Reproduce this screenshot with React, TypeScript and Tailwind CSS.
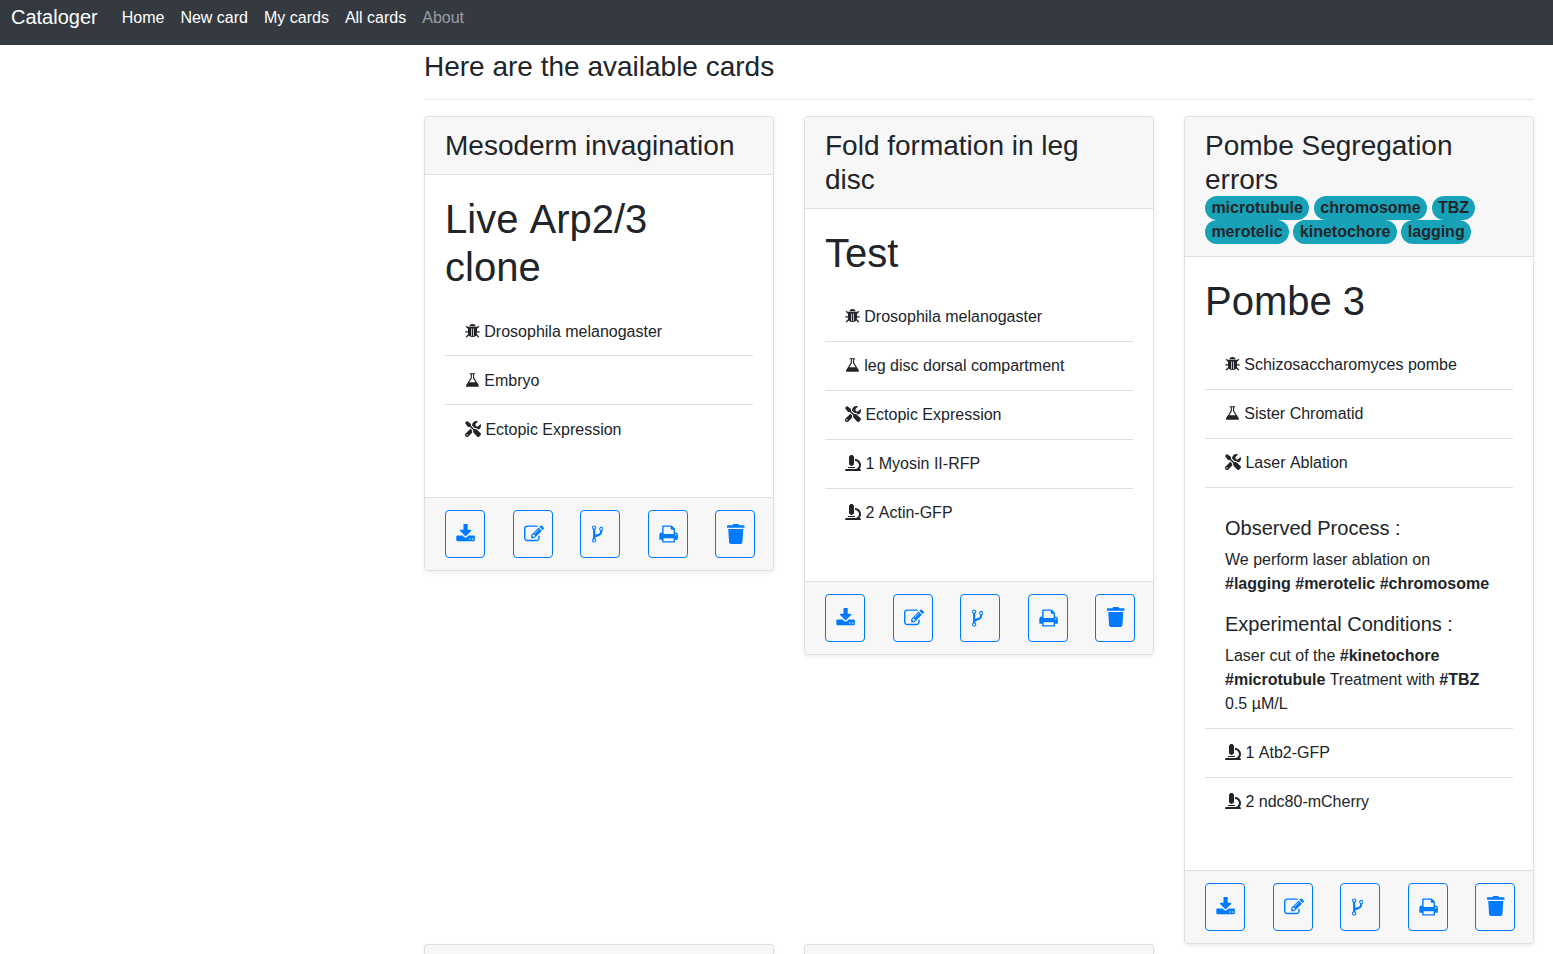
import type { ReactNode } from "react";
import { FaMicroscope, FaTools, FaTrash } from "react-icons/fa";

const paths = {
  flask: "M1591 1448q56 89 21.5 152.5t-140.5 63.5h-1152q-106 0-140.5-63.5t21.5-152.5l503-793v-399h-64q-26 0-45-19t-19-45 19-45 45-19h512q26 0 45 19t19 45-19 45-45 19h-64v399zm-779-725l-272 429h712l-272-429-20-31v-436h-128v436z",
  download: "M1344 1344q0-26-19-45t-45-19-45 19-19 45 19 45 45 19 45-19 19-45zm256 0q0-26-19-45t-45-19-45 19-19 45 19 45 45 19 45-19 19-45zm128-224v320q0 40-28 68t-68 28h-1472q-40 0-68-28t-28-68v-320q0-40 28-68t68-28h465l135 136q58 56 136 56t136-56l136-136h464q40 0 68 28t28 68zm-325-569q17 41-14 70l-448 448q-18 19-45 19t-45-19l-448-448q-31-29-14-70 17-39 59-39h256v-448q0-26 19-45t45-19h256q26 0 45 19t19 45v448h256q42 0 59 39z",
  edit: "M888 1184l116-116-152-152-116 116v56h96v96h56zm440-720q-16-16-33 1l-350 350q-17 17-1 33t33-1l350-350q17-17 1-33zm80 594v190q0 119-84.5 203.5t-203.5 84.5h-832q-119 0-203.5-84.5t-84.5-203.5v-832q0-119 84.5-203.5t203.5-84.5h832q63 0 117 25 15 7 18 23 3 17-9 29l-49 49q-14 14-32 8-23-6-45-6h-832q-66 0-113 47t-47 113v832q0 66 47 113t113 47h832q66 0 113-47t47-113v-126q0-13 9-22l64-64q15-15 35-7t20 29zm-96-738l288 288-672 672h-288v-288zm444 132l-92 92-288-288 92-92q28-28 68-28t68 28l152 152q28 28 28 68t-28 68z",
  fork: "M672 1472q0-40-28-68t-68-28-68 28-28 68 28 68 68 28 68-28 28-68zm0-1152q0-40-28-68t-68-28-68 28-28 68 28 68 68 28 68-28 28-68zm640 128q0-40-28-68t-68-28-68 28-28 68 28 68 68 28 68-28 28-68zm96 0q0 52-26 96.5t-70 69.5q-2 287-226 414-67 38-203 81-128 40-169.5 71t-41.5 100v26q44 25 70 69.5t26 96.5q0 80-56 136t-136 56-136-56-56-136q0-52 26-96.5t70-69.5v-820q-44-25-70-69.5t-26-96.5q0-80 56-136t136-56 136 56 56 136q0 52-26 96.5t-70 69.5v497q54-26 154-57 55-17 87.5-29.5t70.5-31 59-39.5 40.5-51 28-69.5 8.5-91.5q-44-25-70-69.5t-26-96.5q0-80 56-136t136-56 136 56 56 136z",
  print: "M448 1536h896v-256h-896v256zm0-640h896v-384h-160q-40 0-68-28t-28-68v-160h-640v640zm1152 64q0-26-19-45t-45-19-45 19-19 45 19 45 45 19 45-19 19-45zm128 0v416q0 13-9.5 22.5t-22.5 9.5h-224v160q0 40-28 68t-68 28h-960q-40 0-68-28t-28-68v-160h-224q-13 0-22.5-9.5t-9.5-22.5v-416q0-79 56.5-135.5t135.5-56.5h64v-544q0-40 28-68t68-28h672q40 0 88 20t76 48l152 152q28 28 48 76t20 88v256h64q79 0 135.5 56.5t56.5 135.5z",
};

function Glyph({ name, box, className }: { name: keyof typeof paths; box: string; className: string }) {
  return (
    <svg viewBox={box} fill="currentColor" className={className}>
      <path d={paths[name]} />
    </svg>
  );
}

function Bug() {
  return (
    <svg viewBox="0 0 14.86 16" fill="currentColor" className="mr-[4.45px] mb-[1.7px] h-4 w-[14.86px] shrink-0">
      <path d="M4.3 3.2Q4.6 1 7.5 1T10.7 3.2Z" />
      <path
        fillRule="evenodd"
        d="M3 3.8H12V10Q12 13.8 7.5 14Q3 13.8 3 10ZM6 5.4V13H6.7V5.4ZM8.3 5.4V13H9V5.4Z"
      />
      <path
        d="M1.4 3.6 3.6 5.6M.8 8.8H3.6M1.5 13.8 4.2 11M13.6 3.6 11.4 5.6M14.2 8.8H11.4M13.5 13.8 10.8 11"
        fill="none"
        stroke="currentColor"
        strokeWidth="1.3"
        strokeLinecap="round"
      />
    </svg>
  );
}

const itemIcons = {
  bug: <Bug />,
  flask: <Glyph name="flask" box="64 0 1664 1792" className="mr-[4.45px] mb-[1.7px] h-4 w-[14.86px] shrink-0" />,
  tools: <FaTools className="mr-[4.45px] mb-0.5 size-4 shrink-0" />,
  scope: <FaMicroscope className="mr-[4.45px] mb-0.5 size-4 shrink-0" />,
};

function Item({ icon, children, last, wide }: { icon: keyof typeof itemIcons; children: string; last?: boolean; wide?: boolean }) {
  return (
    <li
      className={
        last
          ? "flex items-center px-5 pt-[12.3px] pb-[11.7px]"
          : "flex items-center border-b border-[#dfdfdf] px-5 pt-[12.3px] pb-[11.7px]"
      }
    >
      {itemIcons[icon]}
      <span className={wide ? "[word-spacing:0.055em]" : undefined}>{children}</span>
    </li>
  );
}

function Action({ label, children }: { label: string; children: ReactNode }) {
  return (
    <button aria-label={label} className="flex h-12 w-10 shrink-0 items-center rounded border border-[#007bff] pl-2.5 text-[#007bff]">
      {children}
    </button>
  );
}

function Actions() {
  return (
    <footer className="flex gap-[27.55px] border-t border-[#dfdfdf] bg-[#f7f7f7] px-5 py-3">
      <Action label="Download"><Glyph name="download" box="37 0 1702 1792" className="h-5 w-[19px] shrink-0" /></Action>
      <Action label="Edit"><Glyph name="edit" box="0 0 1792 1792" className="size-5 shrink-0" /></Action>
      <Action label="Fork"><Glyph name="fork" box="384 0 1024 1792" className="ml-[0.5px] h-5 w-[11.43px] shrink-0" /></Action>
      <Action label="Print"><Glyph name="print" box="37 0 1702 1792" className="h-5 w-[19px] shrink-0" /></Action>
      <Action label="Delete"><FaTrash className="mb-px ml-px h-5 w-[17.5px] shrink-0" /></Action>
    </footer>
  );
}

function Card({ title, name, tags, children }: { title: string; name: string; tags?: string[][]; children: ReactNode }) {
  return (
    <article className="w-[350px] overflow-hidden rounded border border-[#dfdfdf] bg-white shadow-[0_2px_4px_rgba(0,0,0,0.075)]">
      <header className="border-b border-[#dfdfdf] bg-[#f7f7f7] px-5 pt-[12.2px] pb-[11.8px]">
        <h3 className="text-[28px] leading-[33.6px]">{title}</h3>
        {tags?.map((row) => (
          <div key={row[0]} className="flex h-6 gap-[4.5px]">
            {row.map((tag) => (
              <b key={tag} className="rounded-full bg-[#17a2b8] px-[6.4px]">{tag}</b>
            ))}
          </div>
        ))}
      </header>
      <div className="p-5">
        <h1 className={name.includes(" A") ? "w-[300px] text-[40px] leading-[48px] [word-spacing:0.055em]" : "text-[40px] leading-[48px]"}>
          {name}
        </h1>
        <ul className="mt-4 mb-6">{children}</ul>
      </div>
      <Actions />
    </article>
  );
}

export default function App() {
  return (
    <div className="h-[954px] overflow-hidden bg-white font-['Liberation_Sans',sans-serif] text-base text-[#212529]">
      <nav className="flex h-[45px] bg-[#343a40] pl-[11px] text-white">
        <span className="mr-6 pt-0.5 text-xl leading-[30px]">Cataloger</span>
        <div className="flex gap-4 pt-1.5 leading-6">
          <a>Home</a>
          <a>New card</a>
          <a>My cards</a>
          <a>All cards</a>
          <a className="text-white/50">About</a>
        </div>
      </nav>
      <main className="ml-[424px] w-[1110px]">
        <h3 className="pt-[5px] text-[28px] leading-[33.6px]">Here are the available cards</h3>
        <hr className="mt-[15.2px] border-t border-[#e5e5e5]" />
        <div className="mt-4 grid grid-cols-3 items-start gap-x-[30px]">
          <Card title="Mesoderm invagination" name="Live Arp2/3 clone">
            <Item icon="bug">Drosophila melanogaster</Item>
            <Item icon="flask">Embryo</Item>
            <Item icon="tools" last>Ectopic Expression</Item>
          </Card>
          <Card title="Fold formation in leg disc" name="Test">
            <Item icon="bug">Drosophila melanogaster</Item>
            <Item icon="flask">leg disc dorsal compartment</Item>
            <Item icon="tools">Ectopic Expression</Item>
            <Item icon="scope">1 Myosin II-RFP</Item>
            <Item icon="scope" last wide>2 Actin-GFP</Item>
          </Card>
          <Card
            title="Pombe Segregation errors"
            name="Pombe 3"
            tags={[["microtubule", "chromosome", "TBZ"], ["merotelic", "kinetochore", "lagging"]]}
          >
            <Item icon="bug">Schizosaccharomyces pombe</Item>
            <Item icon="flask">Sister Chromatid</Item>
            <Item icon="tools" wide>Laser Ablation</Item>
            <li className="border-b border-[#dfdfdf] px-5 pt-7 pb-3">
              <h5 className="mb-2 text-xl leading-6">Observed Process :</h5>
              <p className="mb-4">We perform laser ablation on <b>#lagging #merotelic #chromosome</b></p>
              <h5 className="mb-2 text-xl leading-6">Experimental Conditions :</h5>
              <p>Laser cut of the <b>#kinetochore #microtubule</b> Treatment with <b>#TBZ</b> 0.5 µM/L</p>
            </li>
            <Item icon="scope" wide>1 Atb2-GFP</Item>
            <Item icon="scope" last>2 ndc80-mCherry</Item>
          </Card>
          <div className="h-3 rounded-t border border-b-0 border-[#dfdfdf] bg-[#f7f7f7] shadow-[0_2px_4px_rgba(0,0,0,0.075)]" />
          <div className="h-3 rounded-t border border-b-0 border-[#dfdfdf] bg-[#f7f7f7] shadow-[0_2px_4px_rgba(0,0,0,0.075)]" />
        </div>
      </main>
    </div>
  );
}
